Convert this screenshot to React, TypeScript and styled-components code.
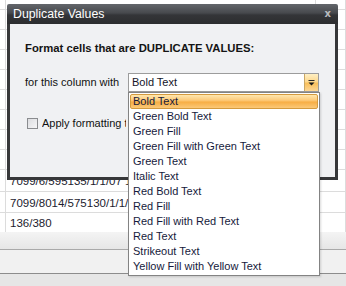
import styled, { createGlobalStyle } from "styled-components";

const GlobalStyle = createGlobalStyle`
  html, body {
    margin: 0;
    padding: 0;
    background: #ffffff;
  }
  body {
    font-family: "Liberation Sans", Arial, sans-serif;
  }
`;

const Page = styled.div`
  position: relative;
  width: 346px;
  height: 286px;
  overflow: hidden;
  background: #ffffff;
`;

const Sheet = styled.div`
  display: flex;
  flex-direction: column;
`;

const Row = styled.div<{ $h: number }>`
  display: grid;
  grid-template-columns: 6px 310px 1fr;
  height: ${(p) => p.$h}px;
`;

const Cell = styled.div`
  border-right: 1px solid #dcdcdc;
  border-bottom: 1px solid #dcdcdc;
  font-size: 11.5px;
  line-height: 17px;
  padding: 3px 0 0 4px;
  color: #1c1c2e;
  white-space: nowrap;
  overflow: visible;
`;

const Band = styled.div<{ $h: number; $bg: string; $line?: string }>`
  height: ${(p) => p.$h}px;
  background: ${(p) => p.$bg};
  border-bottom: ${(p) => (p.$line ? `1px solid ${p.$line}` : "none")};
`;

const Dialog = styled.div`
  position: absolute;
  left: 7px;
  top: 4px;
  width: 331px;
  height: 176px;
  display: flex;
  flex-direction: column;
`;

const TitleBar = styled.div`
  height: 20px;
  display: flex;
  align-items: center;
  justify-content: space-between;
  padding: 0 7px 0 6px;
  background: linear-gradient(#63666b 0%, #47494d 45%, #343538 55%, #2c2d2f 100%);
  color: #ffffff;
  font-size: 12.3px;
  line-height: 20px;
  border-radius: 2px 2px 0 0;
`;

const Close = styled.span`
  color: #b9bbbe;
  font-size: 10px;
  font-weight: bold;
  font-family: "DejaVu Sans", sans-serif;
`;

const Body = styled.div`
  flex: 1;
  background: #f0f1f3;
  border: 3px solid #363739;
  border-top: none;
  padding: 17px 15px 0 15px;
  color: #111111;
  font-size: 11px;
`;

const Heading = styled.div`
  font-weight: bold;
  font-size: 11.3px;
  line-height: 14px;
  color: #141414;
`;

const FieldRow = styled.div`
  display: flex;
  align-items: center;
  height: 19px;
  margin-top: 18px;
`;

const Label = styled.div`
  width: 103px;
  line-height: 19px;
`;

const SelectWrap = styled.div`
  position: relative;
  width: 191px;
`;

const SelectBox = styled.div`
  box-sizing: border-box;
  height: 19px;
  border: 1px solid #9c9c9c;
  background: #ffffff;
  display: flex;
  align-items: center;
  padding-left: 3px;
  line-height: 17px;
  color: #141428;
`;

const SelectValue = styled.span`
  flex: 1;
`;

const DropButton = styled.div`
  width: 13px;
  height: 17px;
  display: flex;
  align-items: center;
  justify-content: center;
  background: linear-gradient(#fff0c4 0%, #fdd88e 45%, #f9c05c 55%, #fcd796 100%);
  border-left: 1px solid #c9a766;
`;

const List = styled.div`
  position: absolute;
  top: 100%;
  left: 0;
  width: 192px;
  box-sizing: border-box;
  border: 1px solid #838383;
  background: #ffffff;
  padding: 1px 0;
  box-shadow: 1px 1px 2px rgba(0, 0, 0, 0.15);
  z-index: 2;
`;

const Item = styled.div<{ $active?: boolean }>`
  box-sizing: border-box;
  height: 15px;
  margin: 0 1px;
  padding-left: 2px;
  line-height: 13px;
  color: #161a3c;
  border: 1px solid ${(p) => (p.$active ? "#d49a3e" : "transparent")};
  border-radius: 2px;
  background: ${(p) =>
    p.$active
      ? "linear-gradient(#ffe7ae 0%, #fdca7a 40%, #f7ae45 55%, #fbc878 100%)"
      : "transparent"};
`;

const CheckRow = styled.div`
  display: flex;
  align-items: center;
  gap: 4px;
  margin-top: 24px;
  padding-left: 2px;
  line-height: 15px;
`;

const Box = styled.div`
  width: 11px;
  height: 11px;
  box-sizing: border-box;
  border: 1px solid #8a8c8f;
  background: linear-gradient(135deg, #dcdde0, #f6f6f7);
`;

const CheckLabel = styled.span`
  max-width: 84px;
  overflow: hidden;
  white-space: nowrap;
`;

const options = [
  "Bold Text",
  "Green Bold Text",
  "Green Fill",
  "Green Fill with Green Text",
  "Green Text",
  "Italic Text",
  "Red Bold Text",
  "Red Fill",
  "Red Fill with Red Text",
  "Red Text",
  "Strikeout Text",
  "Yellow Fill with Yellow Text",
];

// row heights follow the sheet: the row just under the dialog is a little taller
const rows = [
  { h: 10, text: "" },
  { h: 20, text: "" },
  { h: 20, text: "" },
  { h: 20, text: "" },
  { h: 20, text: "" },
  { h: 20, text: "" },
  { h: 20, text: "" },
  { h: 20, text: "" },
  { h: 20, text: "" },
  { h: 22, text: "7099/6/595135/1/1/07 1" },
  { h: 20, text: "7099/8014/575130/1/1/1" },
  { h: 20, text: "136/380" },
];

export default function App() {
  return (
    <Page>
      <GlobalStyle />
      <Sheet>
        {rows.map((r, i) => (
          <Row key={i} $h={r.h}>
            <Cell />
            <Cell>{r.text}</Cell>
            <Cell />
          </Row>
        ))}
        <Band $h={17} $bg="linear-gradient(#f4f4f4, #e6e6e6)" $line="#a9a9a9" />
        <Band $h={23} $bg="#f1f1f1" $line="#8c8c8c" />
        <Band $h={12} $bg="#e6e6e6" />
      </Sheet>

      <Dialog>
        <TitleBar>
          <span>Duplicate Values</span>
          <Close>x</Close>
        </TitleBar>
        <Body>
          <Heading>Format cells that are DUPLICATE VALUES:</Heading>
          <FieldRow>
            <Label>for this column with</Label>
            <SelectWrap>
              <SelectBox>
                <SelectValue>Bold Text</SelectValue>
                <DropButton>
                  <svg width="7" height="6" viewBox="0 0 7 6">
                    <path d="M0.5 0.5h6" stroke="#2a2a2a" strokeWidth="1" />
                    <path d="M0.5 2.5h6L3.5 5.5z" fill="#1a1a1a" />
                  </svg>
                </DropButton>
              </SelectBox>
              <List>
                {options.map((o, i) => (
                  <Item key={o} $active={i === 0}>
                    {o}
                  </Item>
                ))}
              </List>
            </SelectWrap>
          </FieldRow>
          <CheckRow>
            <Box />
            <CheckLabel>Apply formatting to entire row</CheckLabel>
          </CheckRow>
        </Body>
      </Dialog>
    </Page>
  );
}
